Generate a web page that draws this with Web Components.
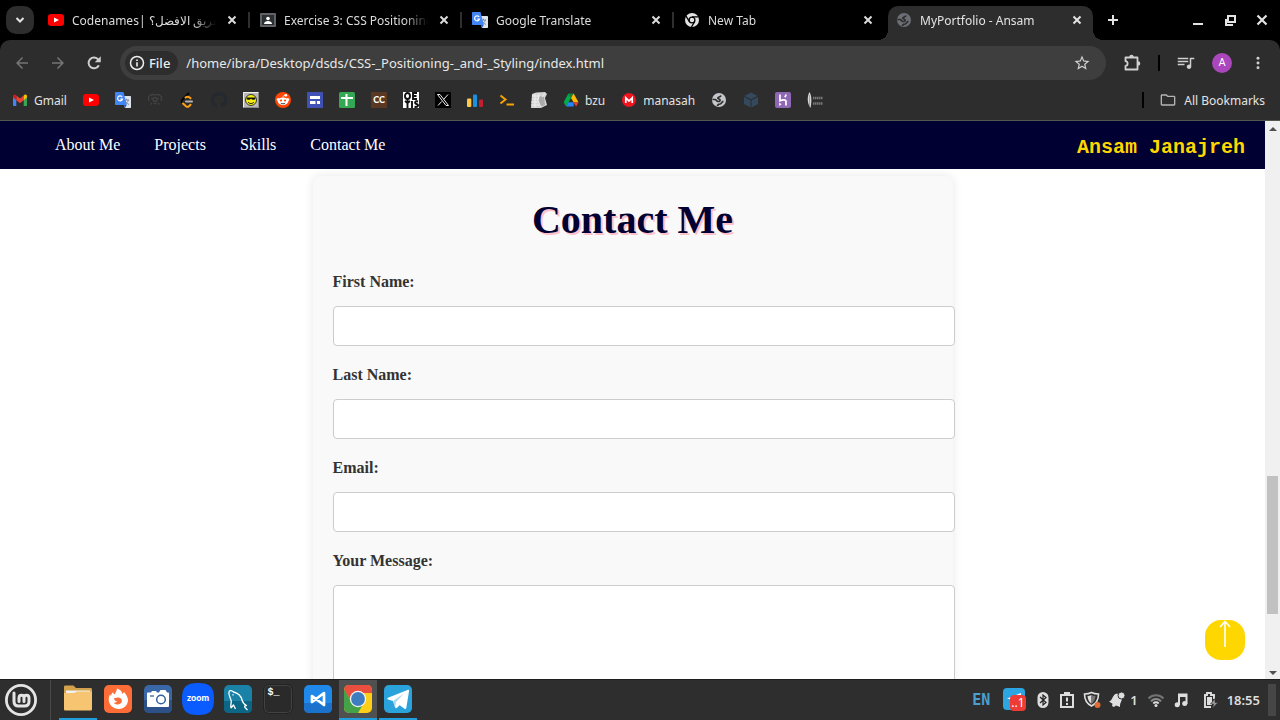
<!DOCTYPE html>
<html lang="en">
<head>
<meta charset="utf-8">
<title>MyPortfolio - Ansam</title>
<style>
html,body{margin:0;height:100%;overflow:hidden;background:#000}
body{font-family:"Noto Sans","Liberation Sans",sans-serif;display:flex;flex-direction:column}
browser-window{flex:1;min-height:0}
</style>
</head>
<body>
<browser-window>
  <tab-strip slot="tabs">
    <browser-tab icon="youtube">Codenames| الفريق الافضل؟</browser-tab>
    <browser-tab icon="classroom">Exercise 3: CSS Positioning</browser-tab>
    <browser-tab icon="translate">Google Translate</browser-tab>
    <browser-tab icon="chromeMono" last>New Tab</browser-tab>
    <browser-tab icon="globeDim" active>MyPortfolio - Ansam</browser-tab>
  </tab-strip>
  <tool-bar slot="toolbar"></tool-bar>
  <bookmark-bar slot="bookmarks"></bookmark-bar>
  <portfolio-page></portfolio-page>
  <scroll-bar slot="scroll"></scroll-bar>
</browser-window>
<task-bar></task-bar>

<script>
const S = (vb, body, extra = '') => `<svg viewBox="0 0 ${vb} ${vb}" ${extra} aria-hidden="true">${body}</svg>`;
const P = (d, fill = 'currentColor') => `<path fill="${fill}" d="${d}"/>`;
const GLOBE = '<circle cx="8" cy="8" r="7" fill="FG"/><path fill="none" stroke="BG" stroke-width="1.7" d="M1.5 7.5H4c1.500 0 1.500 2 3 2s2.500-.5 2-1.800c-.4-1-2.200-.5-2.200-1.700 0-1.500 2.700-.5 3.200-2.500M6.500 14c0-1.500 1.200-1.800 2.500-2 2-.4 1.500-2.500 3.500-2.700"/>';
const TR = '<path fill="#dfe3ea" d="M6 4h9.300c.4 0 .7.300.7.700v10.600c0 .4-.3.700-.7.700H10z"/><path fill="none" stroke="#7c8aa0" d="M9 8h5M11.500 6.800V8M13.300 8c-.4 2-2 3.500-3.500 4M10 8.500c.7 1.800 2.300 3.200 4 4"/><path fill="#4285f4" d="M.7 0h7.800l3.300 13H.7A.7.700 0 0 1 0 12.300V.7C0 .3.300 0 .7 0z"/><path fill="#2a62c8" d="M8.800 13h3L10 16z"/><path fill="none" stroke="#fff" stroke-width="1.200" d="M7.200 5A2.500 2.500 0 1 0 7.500 7H5.200"/>';
const ICONS = {
  chevron: S(16, '<path fill="none" stroke="currentColor" stroke-width="2" d="m4.500 6 3.500 3.500L11.500 6"/>'),
  close: S(16, '<path stroke="currentColor" stroke-width="2" d="m4.500 4.500 7 7m0-7-7 7"/>'),
  plus: S(16, '<path stroke="currentColor" stroke-width="2" d="M8 3v10M3 8h10"/>'),
  minimize: S(16, '<path stroke="currentColor" stroke-width="2" d="M3 12h10"/>'),
  restore: S(16, '<path fill="none" stroke="currentColor" stroke-width="2" d="M6 4h7v6H6zM4 7v6h7"/>'),
  closeBig: S(16, '<path stroke="currentColor" stroke-width="2.200" d="m3.500 3.500 9 9m0-9-9 9"/>'),
  youtube: S(16, '<rect y="2" width="16" height="12" rx="3" fill="#f00"/><path fill="#fff" d="m6 5.500 5 2.500-5 2.500z"/>'),
  classroom: S(16, '<rect y="1" width="16" height="14" rx="1" fill="#5f6368"/><rect x="2" y="3" width="12" height="10" fill="#2d3033"/><circle cx="8" cy="6.500" r="1.800" fill="#fff"/><path fill="#fff" d="M4 12c0-2 2-3 4-3s4 1 4 3z"/>'),
  translate: S(16, TR),
  chromeMono: S(16, '<circle cx="8" cy="8" r="7" fill="#e3e3e3"/><circle cx="8" cy="8" r="2.900" fill="none" stroke="#000" stroke-width="1.300"/><path fill="none" stroke="#000" stroke-width="1.300" d="M8 4.800h6.500M5.200 9.400 2 4M10.800 9.400 7.500 15"/>'),
  globeDim: S(16, GLOBE.replace('FG', '#6b6f75').replace('BG', '#2d2d2d')),
  globe: S(16, GLOBE.replace('FG', '#c4c7cc').replace('BG', '#2d2d2d')),
  back: S(24, P('M20 11H7.830l5.590-5.590L12 4l-8 8 8 8 1.410-1.410L7.830 13H20z')),
  forward: S(24, P('M12 4l-1.410 1.410L16.170 11H4v2h12.170l-5.580 5.590L12 20l8-8z')),
  reload: S(24, '<path fill="none" stroke="currentColor" stroke-width="2.600" d="M18.500 15a7.200 7.200 0 1 1-.8-7.500L19 9"/><path fill="currentColor" d="M21 3v8h-8z"/>'),
  info: S(16, '<circle cx="8" cy="8" r="6.500" fill="none" stroke="currentColor" stroke-width="1.500"/><path stroke="currentColor" stroke-width="1.600" d="M8 7.200v4.300M8 4.500V6"/>'),
  star: S(24, P('M22 9.240l-7.190-.620L12 2 9.190 8.630 2 9.240l5.460 4.730L5.820 21 12 17.270 18.180 21l-1.630-7.030L22 9.240zM12 15.400l-3.760 2.270 1-4.280-3.320-2.880 4.380-.380L12 6.100l1.710 4.040 4.380.380-3.320 2.880 1 4.280L12 15.400z')),
  puzzle: S(18, '<path fill="none" stroke="currentColor" stroke-width="1.800" stroke-linejoin="round" d="M2.500 3.500h12v12h-12v-3.500c2.800-.1 2.800-4.700 0-4.800z"/><path fill="currentColor" d="M6.300 3a2.200 2.200 0 0 1 4.400 0zM15 7.200a2.300 2.300 0 0 1 0 4.600z"/>'),
  queue: S(24, P('M15 5H1v2h14V5zm0 4H1v2h14V9zM1 15h9v-2H1v2zM17 5v9.180c-.310-.110-.650-.180-1-.180-1.660 0-3 1.340-3 3s1.340 3 3 3 3-1.340 3-3V7h4V5h-6z')),
  dots: S(16, '<g fill="currentColor"><circle cx="8" cy="2.500" r="1.700"/><circle cx="8" cy="8" r="1.700"/><circle cx="8" cy="13.500" r="1.700"/></g>'),
  gmail: S(16, '<path fill="#4285f4" d="M1 4v9c0 .6.500 1 1 1h2.300V7z"/><path fill="#34a853" d="M11.700 14H14c.5 0 1-.4 1-1V4l-3.300 3z"/><path fill="#ea4335" d="M4.300 8.200V3.500L8 6.500l3.700-3v4.700L8 11.200z"/><path fill="#c5221f" d="M1 4.300c0-1.600 1.500-2.200 2.600-1.400l.7.600v4.700L1 5.600z"/><path fill="#fbbc04" d="M15 4.300c0-1.600-1.500-2.200-2.600-1.400l-.7.600v4.700L15 5.600z"/>'),
  openai: S(16, '<g fill="none" stroke="#424242" stroke-width="1.300"><path d="M2 9C0 4 4 1.500 8 3c4-1.500 8 1 6 6"/><circle cx="8" cy="7.500" r="2"/><path d="m5 11-1.500 1.500M11 11l1.500 1.500M6.500 11.500h3M4 6l2 1M12 6l-2 1"/></g>'),
  leetcode: S(16, '<path fill="none" stroke="#070706" stroke-width="2" stroke-linecap="round" d="M9.500 1.500 3 8c-.6.800-.5 1.800 0 2.500"/><path fill="none" stroke="#ffa116" stroke-width="2" stroke-linecap="round" d="m4 11.500 3 2.700c1 .8 2 .8 3 0l1.500-1.500M6.500 5.500c1.800-1.300 3.400-1 5 .7"/><path stroke="#b3b3b3" stroke-width="2" stroke-linecap="round" d="M7 9.500h6"/>'),
  github: S(16, P('M8 0C3.580 0 0 3.580 0 8c0 3.540 2.290 6.530 5.470 7.590.4.070.550-.170.550-.380 0-.190-.010-.820-.010-1.490-2.010.370-2.530-.490-2.690-.940-.090-.230-.480-.940-.820-1.130-.280-.150-.680-.520-.010-.530.630-.010 1.080.580 1.230.820.720 1.210 1.870.870 2.330.660.070-.520.280-.870.510-1.070-1.780-.2-3.640-.890-3.640-3.950 0-.870.310-1.590.820-2.150-.080-.2-.360-1.020.080-2.120 0 0 .670-.210 2.200.820.640-.180 1.320-.270 2-.270s1.360.090 2 .270c1.530-1.040 2.200-.820 2.200-.820.440 1.100.160 1.920.080 2.120.510.560.820 1.270.820 2.150 0 3.070-1.870 3.750-3.650 3.950.290.250.540.730.540 1.480 0 1.070-.010 1.930-.010 2.200 0 .210.150.460.550.380A8.010 8.010 0 0016 8c0-4.420-3.580-8-8-8z', '#24292f')),
  smiley: S(16, '<path fill="#b9b9b9" d="M0 0h16v16H0z"/><path fill="none" stroke="#eee" d="M15.500.5H.5v15"/><path fill="none" stroke="#888" d="M.5 15.500h15V.5"/><circle cx="8" cy="8" r="5.500" fill="#f4ec13" stroke="#333"/><path fill="#111" d="M3.500 5.500h9v1l-1 1.200H9.500L8 6.700 6.500 7.700h-2l-1-1.200z"/><path fill="none" stroke="#111" d="M5 10c1.500 2 4.500 2 6 0"/>'),
  reddit: S(16, '<circle cx="8" cy="8" r="8" fill="#ff4500"/><g fill="#fff"><circle cx="3.300" cy="7.500" r="1.600"/><circle cx="12.700" cy="7.500" r="1.600"/><circle cx="10.800" cy="3.300" r="1.400"/><ellipse cx="8" cy="9.300" rx="5.200" ry="3.900"/></g><g fill="#ff4500"><circle cx="6" cy="8.500" r="1.100"/><circle cx="10" cy="8.500" r="1.100"/></g><path fill="none" stroke="#222" stroke-width=".9" d="M5.800 11.200c1 .8 3.400.8 4.400 0"/><path fill="none" stroke="#fff" stroke-width=".8" d="M8 5.500c0-1.500 1-2.300 2-2.200"/>'),
  sites: S(16, '<rect width="16" height="16" rx="1" fill="#3f51b5"/><path fill="#fff" d="M3 4h10v3H3zM3 9h5.500v3H3zM10 9h3v3h-3z"/>'),
  sheets: S(16, '<rect width="16" height="16" rx="1.500" fill="#34a853"/><path fill="#fff" d="M2 5h12v2H8.500v7h-2V7H2zM6.500 2h2v3h-2z"/>'),
  cc: S(16, '<path fill="#5a3821" d="M0 0h16v16H0z"/><text x="8" y="11" font-family="Lato,sans-serif" font-size="9" font-weight="900" text-anchor="middle" fill="#fff">CC</text>'),
  oeis: S(16, '<path fill="#fff" d="M0 0h16v16H0z"/><g fill="none" stroke="#111" stroke-width="1.900"><ellipse cx="4.500" cy="4" rx="2.500" ry="3"/><path d="M14 1h-4v6h4M10 4h3.500M4.500 7v9M2 9l2.500 2L7 9M9 9v7M15 9.500c-3-1-4 1.800-1.500 2.500s2 3.500-2 2.800"/></g>'),
  x: S(16, '<path d="M0 0h16v16H0z"/><path fill="none" stroke="#eee" d="M2.500 2.500H5l8.500 11H11z"/><path stroke="#eee" d="m13 2.500-4.500 5m-1.800 2L3 13.500"/>'),
  bars: S(16, '<rect y="6.500" width="4.300" height="8.500" rx="1" fill="#ffc845"/><rect x="6" y="2.500" width="4" height="12.500" rx="1" fill="#1c91e0"/><rect x="12" y="7.500" width="4" height="7.500" rx="1" fill="#c21f30"/>'),
  prompt: S(16, '<path fill="none" stroke="#f5a300" stroke-width="2" d="m1.500 3.500 5 4-5 4M7.500 12.500H15"/>'),
  sketch: S(16, '<path fill="#d4d4d4" d="m1 2 4-1.500L14 0l2 2-2 4 2 7-6 3H0z"/><path fill="#aaa" d="m9 4 4 1 1 8-5 2-2-7z"/><path fill="none" stroke="#f1f1f1" stroke-width=".9" d="M1 4h8M1 7h7M0 10h8M0 13h9M4 2v13M8 1l-1 8 3 6M11 5l3-4"/>'),
  drive: S(16, '<path fill="#00ac47" d="M5.400 1.500.7 10.300l2.400 4.200L8 6z"/><path fill="#188038" d="M5.400 1.500h5.200L8 6z"/><path fill="#ffba00" d="M10.600 1.500 8 6l2.600 4.300h4.900z"/><path fill="#2684fc" d="M3.100 14.500h7.500v-4.200H5.500z"/><path fill="#ea4335" d="M10.600 10.300h4.900l-2.400 4.200z"/>'),
  mega: S(16, '<circle cx="8" cy="8" r="7" fill="#f0141e"/><path fill="none" stroke="#fff" stroke-width="1.700" d="M4.800 11V5.800L8 9l3.200-3.200V11"/>'),
  cube: S(16, '<g fill="#35495e"><path d="m8 .5 6.500 3.400L8 7.300 1.500 3.900z"/><path d="m1 5 6.500 3.300v7.200L1 12z"/><path d="m15 5-6.500 3.300v7.200L15 12z"/></g>'),
  heroku: S(16, '<rect width="16" height="16" rx="2" fill="#8f68b5"/><path fill="none" stroke="#fff" stroke-width="1.700" d="M5 2.500v6.200c2.300-1 6-1.700 6 .8v4M11 2.500c0 1.100-.5 2-1.300 2.700"/><path fill="#fff" d="m4.200 10.500 2.300 1.700-2.300 1.800z"/>'),
  feather: S(16, '<path fill="#d9d9d9" d="M2.500 0c2 3.500 2.500 8 1 16C.2 11.500-.2 5 2.500 0z"/><path stroke="#888" stroke-width=".7" d="M2.500 3v11"/><path stroke="#777" stroke-width="2.500" stroke-dasharray="1.500 .5" d="M6 6h10M6 11.500h10"/>'),
  folder: S(24, P('M9.170 5.500l2 2H21v11H3v-13h6.170M10 3.500H3c-1.100 0-2 .9-2 2v13c0 1.100.9 2 2 2h18c1.100 0 2-.9 2-2v-11c0-1.100-.9-2-2-2h-9l-2-2z', '#b5b5b5')),
  mint: S(32, '<circle cx="16" cy="16" r="14.600" fill="none" stroke="#e4e4e4" stroke-width="2.800"/><path fill="none" stroke="#e4e4e4" stroke-width="3" stroke-linecap="round" d="M9 9v8.500c0 3 1.500 4.500 4.500 4.500h6c3 0 4.500-1.500 4.500-4.500V14c0-3.800-5-3.800-5 0v3.500M14 17.500V14c0-3.800 5-3.800 5 0"/>'),
  files: S(32, '<path fill="#d3a14c" d="M2 4c0-1 .5-1.500 1.500-1.500h8L14 5h14.500c1 0 1.500.5 1.500 1.500V20H2z"/><path fill="#f1f1f1" d="M4 7.500h24V14H4z"/><path fill="#f7c471" d="M2 10h10l3-1.500h15V26c0 1-.5 1.500-1.500 1.500h-25C2.500 27.500 2 27 2 26z"/>'),
  firefox: S(32, '<rect x="2" y="2" width="28" height="28" rx="5" fill="#fe6d38"/><path fill="#fff" d="M15 5.500c4 1.500 5 3.500 5.500 5.500l1.500-2c3.500 4 5.500 8.500 2.500 13-3 4.300-9 5.300-13.500 2.300-4.800-3.300-5.200-9-3-12.800l1 1.200c.3-1.600 1-2.700 2-3.500l1.200 2.300c1.300-1.400 2.300-3 2.800-6z"/><path fill="#fe6d38" d="M12 15c2 .4 3-.6 4.500-.5 2.500.2 4 2.500 3.200 4.500-1.200 3-5.700 3.500-8.200.5 1.800.5 2.500 0 3.800-1-1.500.1-3-.9-3.300-3.500z"/>'),
  camera: S(32, '<rect x="2" y="2" width="28" height="28" rx="5" fill="#3a67a8"/><path fill="#2c5189" d="M2 17h28v8c0 3-2 5-5 5H7c-3 0-5-2-5-5z"/><path fill="#fff" d="M6 9.500h3l1-1.500h4l1 1.500h2L18.500 7h5L25 9.500h1c.6 0 1 .4 1 1V23c0 .6-.4 1-1 1H6c-.6 0-1-.4-1-1V10.500c0-.6.400-1 1-1z"/><circle cx="19" cy="16.500" r="4.300" fill="none" stroke="#34609f" stroke-width="1.500"/><path stroke="#34609f" stroke-width="1.300" d="M8 13h4"/>'),
  zoom: S(32, '<path fill="#0b5cff" d="M16 0c12 0 16 4 16 16s-4 16-16 16S0 28 0 16 4 0 16 0z"/><text x="16" y="18" font-family="Lato,sans-serif" font-size="9" font-weight="900" text-anchor="middle" fill="#fff">zoom</text>'),
  mysql: S(32, '<rect x="2" y="2" width="28" height="28" rx="5" fill="#1a82a6"/><path fill="#0c6686" d="M2 18h28v7c0 3-2 5-5 5H7c-3 0-5-2-5-5z"/><path fill="none" stroke="#fff" stroke-width="1.300" stroke-linejoin="round" d="M9 25c-1-3 1-5 0-8-1.500-3.500-2.500-6-2-8 .4-2 3-1.500 4.500 0 4.500 1 7.500 4 8.500 8 .7 3 1.800 4 4.500 5.500-2 .2-2.600.8-1 2.500l2 2M9 25l2.500-3 2 4M10.500 11.500l1 .8"/>'),
  terminal: S(32, '<rect x="1.500" y="1.500" width="29" height="29" rx="5" fill="#191919"/><rect x="2.500" y="2.500" width="27" height="27" rx="4" fill="#2a2a2a" stroke="#424242"/><text x="5.500" y="12" font-family="Liberation Mono,monospace" font-size="10" font-weight="700" fill="#fff">$_</text>'),
  vscode: S(32, '<rect x="2" y="2" width="28" height="28" rx="5" fill="#2088e8"/><path fill="#1b72cd" d="M2 20h28v5c0 3-2 5-5 5H7c-3 0-5-2-5-5z"/><path fill="none" stroke="#fff" stroke-width="2.700" stroke-linejoin="round" d="M22 10 10 19V13l12 9z"/>'),
  chrome: S(32, '<defs><clipPath id="c"><rect x="2" y="2" width="28" height="28" rx="5"/></clipPath></defs><g clip-path="url(#c)"><path fill="#fdd017" d="M0 0h32v32H0z"/><path fill="#e94e3e" d="M0 0h32v10H16L8.500 17 0 4z"/><path fill="#45a147" d="M0 3l9.500 16L20 23l-5 9H0z"/></g><circle cx="16" cy="16" r="8.200" fill="#f3f3f3"/><circle cx="16" cy="16" r="6.900" fill="#3e7dbf"/>'),
  telegram: S(32, '<rect x="2" y="2" width="28" height="28" rx="5" fill="#2aa3dd"/><path fill="#fff" d="M25.500 7 6 14.800c-1 .4-1 1.400 0 1.700l5 1.600 2.200 6.400c.4.900 1.200.9 1.800.3l2.700-2.500 4.800 3.500c.9.600 1.600.2 1.800-.8L27 8.300c.3-1.200-.4-1.700-1.500-1.300z"/><path fill="#a9d8ef" d="m11 18 11-7.500-8 8.500-.8 5.500z"/>'),
  trayTelegram: S(24, '<rect width="22" height="22" rx="4" fill="#2ba6e2"/><path fill="#fff" d="M4 10.500 18 5v4H9l-1 2.500z"/><rect x="7" y="7" width="16" height="16" rx="4" fill="#ee3b36"/><text x="15" y="19" font-family="Noto Sans,sans-serif" font-size="12" text-anchor="middle" fill="#fff">..1</text>'),
  bluetooth: S(16, '<rect x="2.500" width="11" height="16" rx="5.500" fill="#dedede"/><path fill="none" stroke="#222" stroke-width="1.200" d="m5 5 6 5.500L8 13V3l3 2.500L5 11"/>'),
  clipboard: S(16, '<path fill="none" stroke="#dedede" stroke-width="2" d="M2 3h12v12H2z"/><path fill="#dedede" d="M5 0h6v4H5zM7 5.500h2v4H7zM7 11h2v2H7z"/>'),
  shield: S(18, '<path fill="none" stroke="#dedede" stroke-width="1.600" d="M8.500 1.500c2 1 4 1.500 7 1.500 0 5-2 9.500-7 12-5-2.500-7-7-7-12 3 0 5-.5 7-1.500z"/><path fill="#dedede" d="M8.500 4c-1.200.600-2.500.900-4 1 .3 3.500 1.500 6 4 7.800z"/><path fill="#777" d="M8.500 4c1.200.6 2.500.9 4 1-.3 3.500-1.500 6-4 7.800z"/><circle cx="14.500" cy="14" r="3" fill="#e06c34"/>'),
  bell: S(16, '<path fill="#dedede" d="M0 9.500C3.500 8.500 3 4 6.500 2c3-1 7 1.500 6.500 5-.3 2.500-2 4-2 6.500v1.500L7 13.500 5 15l-2-1 .5-2.300z"/><circle cx="12.500" cy="3.500" r="3.500" fill="#dedede" stroke="#2e2e2e"/>'),
  wifi: S(16, '<g fill="none" stroke-width="2"><path stroke="#747474" d="M.5 6.500c4.300-4.300 10.700-4.300 15 0"/><path stroke="#8c8c8c" d="M3 9.200c3-2.800 7-2.800 10 0"/><path stroke="#dedede" d="M5.300 11.500c1.600-1.400 3.800-1.400 5.400 0"/></g><circle cx="8" cy="13.500" r="1.500" fill="#dedede"/>'),
  note: S(16, '<path fill="#dedede" d="M5 1.500h9.500V12h-2V5H7v8H5z"/><circle cx="4.200" cy="12.800" r="2.500" fill="#dedede"/><circle cx="11.700" cy="11.500" r="2.500" fill="#dedede"/>'),
  battery: S(16, '<path fill="none" stroke="#dedede" stroke-width="1.900" d="M9 15H3V3h2V1h4v2h3v4"/><path fill="#dedede" d="M5 5h5v8H5z"/><path fill="#9a9a9a" stroke="#2e2e2e" stroke-width=".6" d="M13 6.500 8.500 12h3l-1 4L16 10.500h-3z"/>'),
  arrowUp: S(40, '<path fill="none" stroke="#fff" stroke-width="1.600" d="M20 1v26M15 7l5-5.500L25 7"/>'),
  triUp: S(15, '<path fill="#505050" d="m4 10 4-4 4 4z"/>'),
  triDown: S(15, '<path fill="#505050" d="m4 6 4 4 4-4z"/>')
};

const define = (name, css, html) => customElements.define(name, class extends HTMLElement {
  constructor() {
    super();
    const root = this.attachShadow({ mode: 'open' });
    root.innerHTML = `<style>:host,*{box-sizing:border-box}button{font:inherit;color:inherit;background:none;border:0;padding:0;margin:0}a{color:inherit;text-decoration:none}${css}</style>${typeof html === 'function' ? html(this) : html}`;
  }
});

define('ui-icon', ':host{display:block;width:var(--size,16px);height:var(--size,16px);flex:none}svg{display:block;width:100%;height:100%}',
  el => ICONS[el.getAttribute('name')] || '');

define('browser-window', `
  :host{display:flex;flex-direction:column}
  .view{flex:1;min-height:0;display:flex;background:#fff}
  .content{flex:1;min-width:0;display:flex}
  .content ::slotted(*){flex:1;min-width:0}`,
  '<slot name="tabs"></slot><slot name="toolbar"></slot><slot name="bookmarks"></slot><div class="view"><div class="content"><slot></slot></div><slot name="scroll"></slot></div>');

define('tab-strip', `
  :host{display:flex;flex:none;height:40px;background:#000;color:#e3e3e3;padding:0 10px 0 6px;align-items:center}
  .search{width:28px;height:28px;border-radius:10px;background:#2d2d2d;display:grid;place-items:center;flex:none}
  .tabs{display:flex;align-self:stretch;flex:0 1 1053px;min-width:0;margin-left:6px}
  .new{width:28px;height:28px;display:grid;place-items:center;margin-left:6px;flex:none}
  .win{margin-left:auto;display:flex;gap:16px}`,
  `<button class="search" aria-label="Search tabs"><ui-icon name="chevron"></ui-icon></button>
   <div class="tabs"><slot></slot></div>
   <button class="new" aria-label="New tab"><ui-icon name="plus"></ui-icon></button>
   <div class="win"><button aria-label="Minimize"><ui-icon name="minimize"></ui-icon></button><button aria-label="Restore"><ui-icon name="restore"></ui-icon></button><button aria-label="Close"><ui-icon name="closeBig"></ui-icon></button></div>`);

define('browser-tab', `
  :host{display:flex;flex:0 1 212px;min-width:0;align-items:center;gap:8px;padding:0 2px 0 8px;font-size:12px;color:#dcdcdc;position:relative}
  .title{flex:1;min-width:0;overflow:hidden;white-space:nowrap;-webkit-mask-image:linear-gradient(90deg,#000 calc(100% - 24px),transparent);mask-image:linear-gradient(90deg,#000 calc(100% - 24px),transparent)}
  .sep{width:2px;height:16px;background:#2f2f2f}
  :host([last]) .sep{background:none}
  :host([active]){flex-basis:205px;margin-top:6px;padding:0 8px 6px;background:#2d2d2d;border-radius:10px 10px 0 0;color:#e3e3e3}
  :host([active]) .sep{display:none}
  :host([active])::before,:host([active])::after{content:"";position:absolute;bottom:0;width:10px;height:10px}
  :host([active])::before{right:100%;background:radial-gradient(circle at 0 0,transparent 10px,#2d2d2d 10px)}
  :host([active])::after{left:100%;background:radial-gradient(circle at 100% 0,transparent 10px,#2d2d2d 10px)}`,
  el => `<ui-icon name="${el.getAttribute('icon')}"></ui-icon><span class="title"><slot></slot></span><button aria-label="Close tab"><ui-icon name="close"></ui-icon></button><span class="sep"></span>`);

define('tool-bar', `
  :host{display:flex;flex:none;align-items:center;height:46px;padding:0 8px;background:#2d2d2d;border-radius:10px 10px 0 0;color:#d0d0d0}
  .b{width:28px;height:28px;display:grid;place-items:center;margin-right:8px;--size:18px;flex:none}
  .b:last-child{margin-right:0}
  .off{color:#757575}
  .box{flex:1;min-width:0;display:flex;align-items:center;height:34px;margin:0 12px 0 4px;padding:0 15px 0 5px;background:#3e3e3e;border-radius:17px}
  .chip{display:flex;align-items:center;gap:4px;height:24px;padding:0 8px 0 4px;border-radius:12px;background:#2d2d2d;font-size:13px;font-weight:500;color:#eee}
  input{flex:1;min-width:0;background:none;border:0;outline:0;padding:0 8px;color:#e8e8e8;font:13px "Noto Sans",sans-serif}
  .star{--size:18px}
  .div{width:2px;height:16px;background:#000;margin:0 12px 0 4px}
  .av{width:20px;height:20px;border-radius:50%;background:#ab47bc;color:#fff;font:11px/20px Roboto,sans-serif;text-align:center}
  .dots{--size:14px}`,
  `<button class="b off" aria-label="Back"><ui-icon name="back"></ui-icon></button><button class="b off" aria-label="Forward"><ui-icon name="forward"></ui-icon></button><button class="b" aria-label="Reload"><ui-icon name="reload"></ui-icon></button>
   <div class="box"><button class="chip"><ui-icon name="info"></ui-icon>File</button><input aria-label="Address" value="/home/ibra/Desktop/dsds/CSS-_Positioning-_and-_Styling/index.html"><button class="star" aria-label="Bookmark this page"><ui-icon name="star"></ui-icon></button></div>
   <button class="b" aria-label="Extensions"><ui-icon name="puzzle"></ui-icon></button><span class="div"></span>
   <button class="b" aria-label="Media"><ui-icon name="queue"></ui-icon></button><button class="b" aria-label="Profile"><span class="av">A</span></button><button class="b dots" aria-label="Menu"><ui-icon name="dots"></ui-icon></button>`);

const MARKS = [['gmail', 'Gmail'], 'youtube', 'translate', 'openai', 'leetcode', 'github', 'smiley', 'reddit', 'sites', 'sheets', 'cc', 'oeis', 'x', 'bars', 'prompt', 'sketch', ['drive', 'bzu'], ['mega', 'manasah'], 'globe', 'cube', 'heroku', 'feather'];
define('bookmark-bar', `
  :host{display:flex;flex:none;align-items:center;height:35px;padding:0 7px 6px 4px;background:#2d2d2d;border-bottom:1px solid #565650;color:#e3e3e3;font-size:12px;white-space:nowrap}
  a{display:flex;align-items:center;gap:6px;padding:0 8px}
  .div{width:2px;height:16px;background:#000;margin:0 8px 0 auto}
  .all{gap:8px}`,
  MARKS.map(m => Array.isArray(m) ? `<a href="#"><ui-icon name="${m[0]}"></ui-icon><span>${m[1]}</span></a>` : `<a href="#" aria-label="${m}"><ui-icon name="${m}"></ui-icon></a>`).join('') +
  '<span class="div"></span><a class="all" href="#"><ui-icon name="folder"></ui-icon><span>All Bookmarks</span></a>');

define('scroll-bar', `
  :host{display:flex;flex-direction:column;width:15px;background:#f0f0f0;--size:15px}
  .before{flex:341}.thumb{flex:138;margin:0 2px;background:#c1c1c1}.after{flex:51}`,
  '<ui-icon name="triUp"></ui-icon><div class="before"></div><div class="thumb"></div><div class="after"></div><ui-icon name="triDown"></ui-icon>');

define('portfolio-page', `
  :host{display:block;position:relative;overflow:hidden;background:#fff;font-family:"Liberation Serif",serif;font-size:16px}
  contact-form{margin:7px auto 0}
  .top{position:absolute;right:20px;bottom:20px;width:40px;height:40px;border-radius:16px;background:gold;--size:40px}`,
  '<site-nav></site-nav><contact-form></contact-form><button class="top" aria-label="Back to top"><ui-icon name="arrowUp"></ui-icon></button>');

define('site-nav', `
  :host{display:flex;justify-content:space-between;align-items:center;height:48px;padding:0 20px 0 55px;background:#000033;color:#fff}
  nav{display:flex;gap:34px}
  .name{font:bold 20px/24px "Liberation Mono",monospace;color:gold;padding-top:6px}`,
  '<nav><a href="#">About Me</a><a href="#">Projects</a><a href="#">Skills</a><a href="#">Contact Me</a></nav><span class="name">Ansam Janajreh</span>');

define('contact-form', `
  :host{display:block;max-width:640px;padding:20px;background:#f9f9f9;border-radius:8px;box-shadow:0 0 10px rgba(0,0,0,.1)}
  h1{margin:0 0 30px;font-size:40px;line-height:47px;text-align:center;color:#000033;text-shadow:2px 2px pink}
  label{display:block;margin-bottom:15px;font-weight:bold;line-height:18px;color:#333}
  input,textarea{display:block;box-sizing:content-box;width:100%;height:18px;margin:0 0 20px;padding:10px;border:1px solid #ccc;border-radius:4px;background:#fff;font:16px "Liberation Serif",serif;resize:none}
  textarea{height:150px}`,
  `<form><h1>Contact Me</h1>
   <label for="first">First Name:</label><input id="first" type="text">
   <label for="last">Last Name:</label><input id="last" type="text">
   <label for="mail">Email:</label><input id="mail" type="email">
   <label for="msg">Your Message:</label><textarea id="msg"></textarea></form>`);

const APPS = [['files', 'run'], ['firefox'], ['camera'], ['zoom'], ['mysql'], ['terminal'], ['vscode'], ['chrome', 'run focus'], ['telegram', 'run']];
define('task-bar', `
  :host{display:flex;align-items:center;height:40px;flex:none;position:relative;padding:0 4px 0 5px;background:#2e2e2e;color:#dedede;box-shadow:0 -1px #1d1d1d}
  .menu{--size:32px}
  .line{width:1px;height:40px;background:#4a4a4a;margin:0 8px 0 13px}
  .apps{display:flex;gap:2px;--size:32px;align-self:stretch}
  .apps button{width:38px;display:grid;place-items:center;border-bottom:2px solid transparent}
  .apps .run{border-color:#1f9ede}
  .focus{background:#505050}
  .tray{margin-left:auto;display:flex;align-items:center;gap:8px}
  .lang{font:bold 15px "DejaVu Sans Mono",monospace;color:#4a9fd0;margin-right:5px}
  .t{--size:24px}.s{--size:18px}
  .n{display:flex;align-items:center;gap:5px;margin-right:2px}
  .n,.clock{font-size:13px;font-weight:600}
  .note{margin:0 3px 0 1px}
  .bat{margin:0 1px 0 2px}
  .edge{width:8px;height:32px;background:#464646}`,
  `<button class="menu" aria-label="Menu"><ui-icon name="mint"></ui-icon></button><span class="line"></span>
   <div class="apps">${APPS.map(([n, c = '']) => `<button class="${c}" aria-label="${n}"><ui-icon name="${n}"></ui-icon></button>`).join('')}</div>
   <div class="tray"><span class="lang">EN</span><ui-icon class="t" name="trayTelegram"></ui-icon><ui-icon name="bluetooth"></ui-icon><ui-icon name="clipboard"></ui-icon><ui-icon class="s" name="shield"></ui-icon><span class="n"><ui-icon name="bell"></ui-icon>1</span><ui-icon name="wifi"></ui-icon><ui-icon class="note" name="note"></ui-icon><ui-icon class="bat" name="battery"></ui-icon><span class="clock">18:55</span><span class="edge"></span></div>`);
</script>
</body>
</html>
